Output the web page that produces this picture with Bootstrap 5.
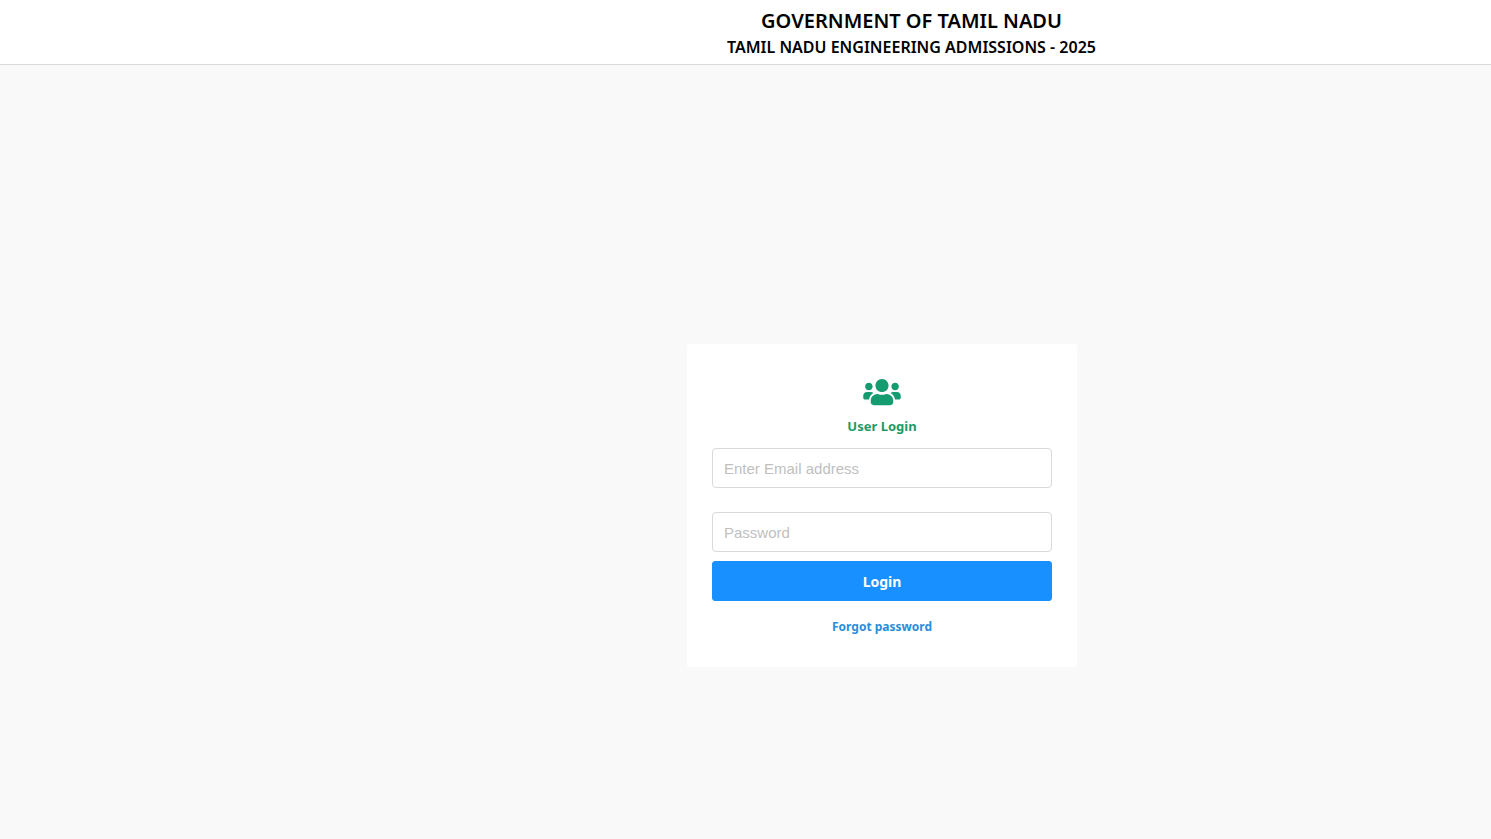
<!DOCTYPE html>
<html lang="en">
<head>
<meta charset="utf-8">
<meta name="viewport" content="width=device-width, initial-scale=1">
<title>Tamil Nadu Engineering Admissions - 2025</title>
<link href="https://cdn.jsdelivr.net/npm/bootstrap@5.3.0/dist/css/bootstrap.min.css" rel="stylesheet">
<style>
  body { background: #f9f9f9; font-family: "Noto Sans", "Open Sans", sans-serif; }
  .site-header { border-bottom: 1px solid #d9d9d9; color: #000; padding-top: 8px; padding-bottom: 4px; }
  .site-title { font-size: 20px; line-height: 26px; font-weight: 600; }
  .site-subtitle { font-size: 16px; line-height: 26px; font-weight: 600; }
  .login-card { width: 390px; border: 0; border-radius: 2px; padding: 33px 25px 30px; }
  .login-icon { width: 38px; height: 30px; fill: #149b70; }
  .login-heading { font-size: 13px; line-height: 20px; color: #1d9a68; margin-top: 9px; }
  .login-field { height: 40px; padding: 0 11px; font: 15px "Liberation Sans", Arial, sans-serif; border-color: #d9d9d9; border-radius: 4px; }
  .login-field::placeholder { color: #bfbfbf; }
  .login-submit { height: 40px; padding: 0; margin-top: 9px; font-size: 14px; --bs-btn-bg: #1890ff; --bs-btn-border-color: #1890ff; border-radius: 3px; }
  .forgot-link { font-size: 12px; line-height: 20px; color: #2a8ddb; }
  @media (min-width: 992px) {
    .site-header { padding-left: 332px; }
    .login-area { padding-left: 273px; padding-top: 279px; }
  }
</style>
</head>
<body>
<header class="site-header bg-white text-center">
  <h1 class="site-title m-0">GOVERNMENT OF TAMIL NADU</h1>
  <h2 class="site-subtitle m-0">TAMIL NADU ENGINEERING ADMISSIONS - 2025</h2>
</header>
<main class="login-area d-flex justify-content-center">
  <form class="login-card card">
    <div class="text-center mb-2">
      <svg class="login-icon d-block mx-auto" viewBox="0 0 640 512" aria-hidden="true"><path d="M96 224c35.300 0 64-28.700 64-64s-28.700-64-64-64-64 28.700-64 64 28.700 64 64 64zm448 0c35.300 0 64-28.700 64-64s-28.700-64-64-64-64 28.700-64 64 28.700 64 64 64zm32 32h-64c-17.600 0-33.500 7.100-45.100 18.600 40.300 22.100 68.900 62 75.100 109.400h66c17.700 0 32-14.300 32-32v-32c0-35.300-28.700-64-64-64zm-256 0c61.900 0 112-50.100 112-112S381.900 32 320 32 208 82.100 208 144s50.100 112 112 112zm76.800 32h-8.300c-20.800 10-43.900 16-68.500 16s-47.600-6-68.500-16h-8.300C179.600 288 128 339.600 128 403.200V432c0 26.500 21.500 48 48 48h288c26.500 0 48-21.500 48-48v-28.800c0-63.600-51.600-115.200-115.200-115.200zm-223.700-13.400C161.500 263.100 145.600 256 128 256H64c-35.300 0-64 28.700-64 64v32c0 17.700 14.300 32 32 32h65.900c6.300-47.400 34.900-87.300 75.200-109.400z"/></svg>
      <h3 class="login-heading fw-bold mb-0">User Login</h3>
    </div>
    <input class="login-field form-control mt-1 mb-4" id="email" type="email" placeholder="Enter Email address" aria-label="Email address">
    <input class="login-field form-control" id="password" type="password" placeholder="Password" aria-label="Password">
    <button class="login-submit btn btn-primary fw-bold w-100 mb-3" type="submit">Login</button>
    <a class="forgot-link fw-bold text-center text-decoration-none" href="#">Forgot password</a>
  </form>
</main>
<script src="https://cdn.jsdelivr.net/npm/bootstrap@5.3.0/dist/js/bootstrap.bundle.min.js"></script>
</body>
</html>
